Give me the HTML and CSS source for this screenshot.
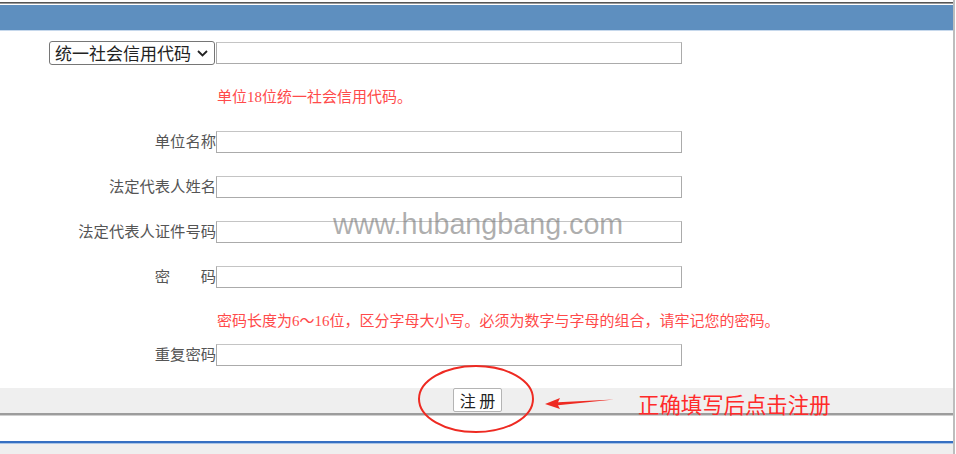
FILE: index.html
```html
<!DOCTYPE html>
<html lang="zh-CN">
<head>
    <meta charset="UTF-8">
    <title>单位注册</title>
    <link rel="stylesheet" href="styles.css">
</head>
<body>
    <div class="page">
        <div class="top-rule"></div>
        <div class="title-bar"></div>

        <form class="reg-form">
            <div class="row first-row">
                <div class="label">
                    <span class="select-wrap">
                        <select class="id-type">
                            <option>统一社会信用代码</option>
                        </select>
                        <svg class="chevron" width="11" height="7" viewBox="0 0 11 7">
                            <path d="M1 1 L5.5 5.5 L10 1" fill="none" stroke="#222" stroke-width="1.8"/>
                        </svg>
                    </span>
                </div>
                <input class="field" type="text">
            </div>
            <p class="hint hint-code">单位18位统一社会信用代码。</p>

            <div class="row gap-24">
                <label class="label">单位名称</label>
                <input class="field" type="text">
            </div>
            <div class="row">
                <label class="label">法定代表人姓名</label>
                <input class="field" type="text">
            </div>
            <div class="row">
                <label class="label">法定代表人证件号码</label>
                <input class="field" type="text">
            </div>
            <div class="row">
                <label class="label">密　　码</label>
                <input class="field" type="password">
            </div>
            <p class="hint hint-pwd">密码长度为6～16位，区分字母大小写。必须为数字与字母的组合，请牢记您的密码。</p>
            <div class="row gap-13">
                <label class="label">重复密码</label>
                <input class="field" type="password">
            </div>
        </form>

        <div class="action-bar">
            <button type="button" class="submit-btn">注 册</button>
        </div>
        <div class="bottom-rule"></div>
        <div class="footer-space"></div>
        <div class="footer-line"></div>
        <div class="footer-gray"></div>

        <!-- screenshot annotations -->
        <span class="watermark">www.hubangbang.com</span>
        <svg class="marks" width="956" height="454" viewBox="0 0 956 454">
            <ellipse cx="476" cy="399" rx="57" ry="33" fill="none" stroke="#ee2a22" stroke-width="2"/>
            <polygon points="545,404 560,398 558,402.2 614,399.6 558,405.2 560,409" fill="#ee2a22"/>
        </svg>
        <span class="note">正确填写后点击注册</span>
    </div>
</body>
</html>
```

FILE: styles.css
```css
body {
    margin: 0;
    background: #fff;
}
.page {
    position: relative;
    width: 953px;
    height: 454px;
    border-right: 2px solid #bdbdbd;
    overflow: hidden;
}
.top-rule {
    margin-top: 2px;
    height: 1px;
    background: #555;
    border-bottom: 1px solid #9a9a9a;
}
.title-bar {
    margin-top: 1px;
    height: 25px;
    background-color: #5e8fbf;
    border-bottom: 1px solid #c6d8ec;
}
.reg-form {
    margin: 0;
    padding-top: 10px;
}
.row {
    display: grid;
    grid-template-columns: 216px 466px;
    align-items: center;
    height: 22px;
    margin-top: 23px;
}
.row.first-row {
    height: 24px;
    margin-top: 0;
}
.row.gap-24 {
    margin-top: 24px;
}
.row.gap-13 {
    margin-top: 13px;
}
.label {
    text-align: right;
    font-family: "Liberation Serif", "Noto Sans CJK SC", serif;
    font-size: 15.3px;
    color: #555;
    white-space: nowrap;
    line-height: 22px;
}
.first-row .label {
    display: flex;
    justify-content: flex-end;
    padding-right: 1px;
}
.select-wrap {
    position: relative;
    display: block;
    height: 24px;
}
.id-type {
    appearance: none;
    -webkit-appearance: none;
    box-sizing: border-box;
    width: 166px;
    height: 24px;
    font-family: "Noto Sans CJK SC", sans-serif;
    font-size: 17px;
    line-height: 22px;
    color: #222;
    border: 1px solid #767676;
    border-radius: 3px;
    background: #fff;
    padding: 0 0 0 5px;
    margin: 0;
}
.chevron {
    position: absolute;
    right: 7px;
    top: 9px;
    pointer-events: none;
}
.field {
    box-sizing: border-box;
    width: 466px;
    height: 22px;
    margin: 0;
    border: 1px solid #ababab;
    border-top-color: #c4c4c4;
    background: #fff;
}
.hint {
    margin: 0;
    padding-left: 217px;
    font-family: "Liberation Serif", "Noto Sans CJK SC", serif;
    font-size: 15px;
    line-height: 20px;
    color: #ff4a4a;
    white-space: nowrap;
}
.hint-code {
    margin-top: 22px;
}
.hint-pwd {
    margin-top: 23px;
}
.action-bar {
    margin-top: 22px;
    height: 25px;
    background: #efefef;
    display: flex;
    justify-content: center;
    align-items: flex-start;
}
.submit-btn {
    width: 49px;
    height: 24px;
    padding: 0;
    margin-left: 2px;
    font-family: "Noto Sans CJK SC", sans-serif;
    font-size: 16px;
    line-height: 20px;
    color: #222;
    background: #fff;
    border: 1px solid #b4b4b4;
    border-radius: 2px;
}
.bottom-rule {
    height: 0;
    border-top: 2px solid #9c9c9c;
    border-bottom: 1px solid #cfcfcf;
}
.footer-space {
    height: 25px;
}
.footer-line {
    height: 2px;
    background: #3670c2;
    border-bottom: 1px solid #a9c4e6;
}
.footer-gray {
    height: 20px;
    background: #efefef;
}
.watermark {
    position: absolute;
    left: 333px;
    top: 206px;
    font-family: "Liberation Sans", sans-serif;
    font-size: 28.7px;
    line-height: 36px;
    color: rgba(120, 120, 120, 0.6);
    pointer-events: none;
}
.marks {
    position: absolute;
    left: 0;
    top: 0;
    pointer-events: none;
}
.note {
    position: absolute;
    left: 638px;
    top: 390px;
    font-family: "Noto Sans CJK SC", sans-serif;
    font-size: 21.4px;
    line-height: 28px;
    color: #ff2a2a;
    white-space: nowrap;
}
```
